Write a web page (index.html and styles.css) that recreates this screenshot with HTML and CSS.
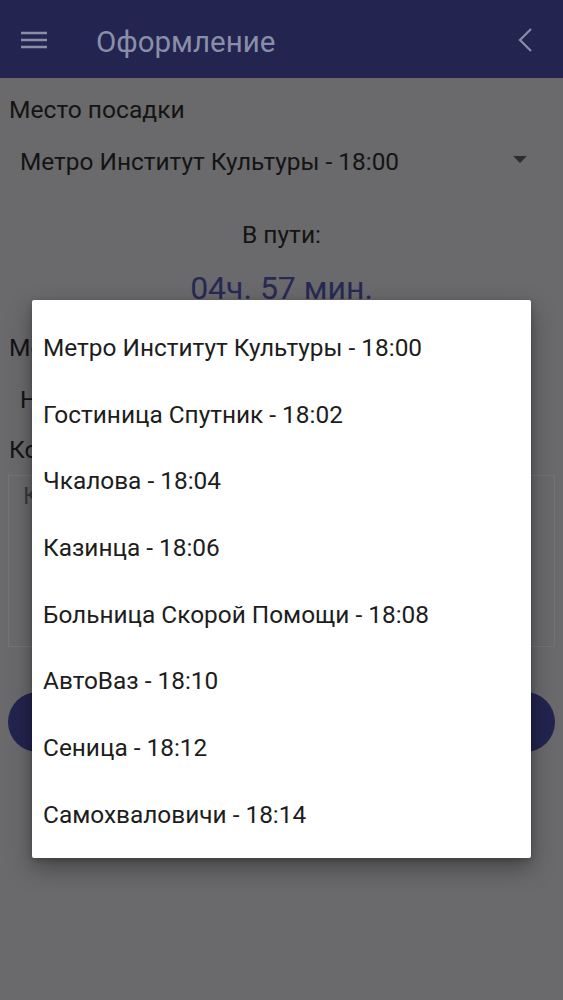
FILE: index.html
```html
<!DOCTYPE html>
<html lang="ru">
<head>
<meta charset="utf-8">
<title>Оформление</title>
<link rel="stylesheet" href="styles.css">
</head>
<body>
<div class="screen">
  <header class="appbar">
    <svg class="menu-icon" width="28" height="18" viewBox="0 0 28 18">
      <path d="M1 2H27M1 9H27M1 16H27" stroke="#8a8ea8" stroke-width="2.4" fill="none"/>
    </svg>
    <div class="title">Оформление</div>
    <svg class="back-icon" width="20" height="26" viewBox="0 0 20 26">
      <path d="M16 2L5 13L16 24" stroke="#8a8ea8" stroke-width="2.2" fill="none"/>
    </svg>
  </header>
  <main class="content">
    <div class="label">Место посадки</div>
    <div class="select">
      <span>Метро Институт Культуры - 18:00</span>
      <svg class="caret" width="14" height="8" viewBox="0 0 14 8"><path d="M0 0H14L7 7Z" fill="#2e2d30"/></svg>
    </div>
    <div class="travel-label">В пути:</div>
    <div class="travel-time">04ч. 57 мин.</div>
    <div class="label label-drop">Место высадки</div>
    <div class="select select-drop"><span>Не выбрано</span></div>
    <div class="label label-comment">Комментарий</div>
    <div class="textarea">Комментарий</div>
    <div class="button">Оформить</div>
  </main>

  <div class="dialog">
    <div class="item">Метро Институт Культуры - 18:00</div>
    <div class="item">Гостиница Спутник - 18:02</div>
    <div class="item">Чкалова - 18:04</div>
    <div class="item">Казинца - 18:06</div>
    <div class="item">Больница Скорой Помощи - 18:08</div>
    <div class="item">АвтоВаз - 18:10</div>
    <div class="item">Сеница - 18:12</div>
    <div class="item">Самохваловичи - 18:14</div>
  </div>
</div>
</body>
</html>
```
FILE: styles.css
```css
html, body {
  margin: 0;
  padding: 0;
}
body {
  font-family: Roboto, "Noto Sans", sans-serif;
  background: #6a696b;
}
.screen {
  position: relative;
  width: 563px;
  height: 1000px;
  overflow: hidden;
  background: #6a696b;
}
.appbar {
  height: 78px;
  background: #23244f;
  display: flex;
  align-items: center;
  box-sizing: border-box;
  padding: 0 0 0 20px;
}
.menu-icon {
  flex: none;
  margin-top: 2px;
}
.title {
  margin-left: 48px;
  font-size: 29.5px;
  color: #8a8ea8;
  flex: 1;
  margin-top: 5px;
}
.back-icon {
  flex: none;
  margin-right: 28px;
  margin-top: 1px;
}
.content {
  padding: 0 8px;
  color: #141414;
}
.label {
  font-size: 24.6px;
  line-height: 30px;
  padding-top: 17px;
  padding-left: 1px;
}
.select {
  display: flex;
  align-items: center;
  justify-content: space-between;
  font-size: 24.4px;
  height: 72px;
  padding-left: 12px;
  padding-right: 28px;
}
.caret {
  margin-top: -2px;
}
.travel-label {
  text-align: center;
  font-size: 24.5px;
  margin-top: 23px;
  line-height: 30px;
}
.travel-time {
  text-align: center;
  font-size: 32px;
  color: #272955;
  margin-top: 20px;
  line-height: 36px;
}
.label-drop {
  padding-top: 27px;
}
.select-drop {
  height: 72px;
}
.label-comment {
  padding-top: 0;
}
.textarea {
  margin-top: 10px;
  height: 172px;
  border: 1px solid #747375;
  box-sizing: border-box;
  padding: 6px 14px;
  font-size: 24px;
  color: #3a393b;
}
.button {
  margin-top: 45px;
  height: 60px;
  border-radius: 30px;
  background: #23244f;
  color: #8a8ea8;
  display: flex;
  align-items: center;
  justify-content: center;
  font-size: 24px;
}
.dialog {
  position: absolute;
  left: 32px;
  top: 300px;
  width: 499px;
  height: 558px;
  box-sizing: border-box;
  background: #ffffff;
  border-radius: 2px;
  padding-top: 14px;
  box-shadow: 0 10px 24px rgba(0,0,0,0.35), 0 2px 6px rgba(0,0,0,0.2);
}
.item {
  height: 66.7px;
  display: flex;
  align-items: center;
  padding-left: 11px;
  font-size: 24.4px;
  color: #1d1d1d;
}
```
